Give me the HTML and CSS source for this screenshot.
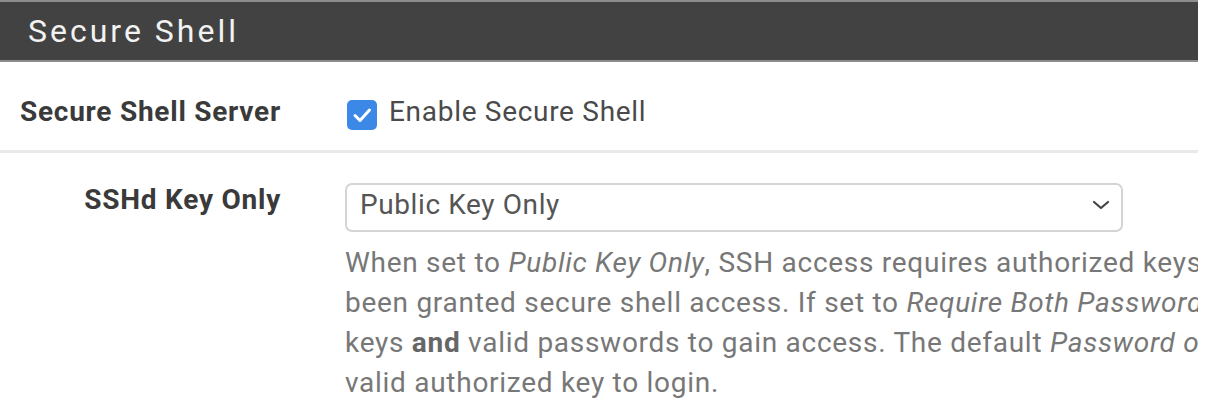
FILE: index.html
```html
<!DOCTYPE html>
<html>
<head>
<meta charset="utf-8">
<link rel="stylesheet" href="styles.css">
</head>
<body>
<div class="panel">
  <div class="panel-heading"><h2 class="panel-title">Secure Shell</h2></div>
  <div class="panel-body">
    <div class="form-group first">
      <div class="label">Secure Shell Server</div>
      <div class="field">
        <label class="check">
          <span class="box"><svg viewBox="0 0 30 30" width="30" height="30"><path d="M8 15.5 L13 20.5 L22.5 10" fill="none" stroke="#fff" stroke-width="3" stroke-linecap="round" stroke-linejoin="round"/></svg></span>
          <span class="check-text">Enable Secure Shell</span>
        </label>
      </div>
    </div>
    <div class="form-group second">
      <div class="label">SSHd Key Only</div>
      <div class="field">
        <div class="select">
          <span class="select-text">Public Key Only</span>
          <svg class="chev" viewBox="0 0 18 10" width="18" height="10"><path d="M2 2 L9 8 L16 2" fill="none" stroke="#444" stroke-width="2.2" stroke-linecap="round" stroke-linejoin="round"/></svg>
        </div>
        <div class="help">
          <div>When set to <em>Public Key Only</em>, SSH access requires authorized keys and these keys must be configured for users that have</div>
          <div>been granted secure shell access. If set to <em>Require Both Password and Public Key</em>, the SSH daemon requires both authorized</div>
          <div>keys <strong>and</strong> valid passwords to gain access. The default <em>Password or Public Key</em> setting allows either a valid password or a</div>
          <div>valid authorized key to login.</div>
        </div>
      </div>
    </div>
  </div>
</div>
</body>
</html>
```
FILE: styles.css
```css
html, body {
  margin: 0;
  padding: 0;
  background: #fff;
}
body {
  font-family: Roboto, "Liberation Sans", sans-serif;
  font-size: 28px;
  line-height: 40px;
  color: #333;
  letter-spacing: 0.6px;
}
.panel {
  width: 1198px;
  overflow: hidden;
}
.panel-heading {
  height: 58px;
  background: #424242;
  border-top: 2px solid #8c8c8c;
  border-bottom: 2px solid #8c8c8c;
  display: flex;
  align-items: center;
  padding-left: 28px;
}
.panel-title {
  margin: 0;
  font-size: 32px;
  font-weight: 400;
  letter-spacing: 3px;
  color: #f2f2f2;
  line-height: 40px;
}
.form-group {
  display: grid;
  grid-template-columns: 280px 1fr;
  column-gap: 65px;
}
.form-group.first {
  padding-top: 30px;
  padding-bottom: 18px;
  border-bottom: 3px solid #e9e9e9;
}
.form-group.second {
  padding-top: 27px;
}
.label {
  text-align: right;
  font-weight: 700;
  color: #3a3a3a;
  white-space: nowrap;
  letter-spacing: 0.75px;
  margin-right: -1px;
}
.field {
  min-width: 0;
}
.check {
  display: flex;
  align-items: center;
  gap: 12px;
  padding-left: 2px;
}
.box {
  width: 30px;
  height: 30px;
  border-radius: 5px;
  background: #3b88e6;
  display: flex;
  margin-top: 6px;
}
.check-text {
  color: #4a4a4a;
  letter-spacing: 0.7px;
}
.select {
  width: 778px;
  height: 49px;
  box-sizing: border-box;
  border: 2px solid #d4d4d4;
  border-radius: 7px;
  display: flex;
  align-items: center;
  justify-content: space-between;
  padding: 0 11px 0 13px;
  margin-top: 3px;
}
.select-text {
  font-size: 28px;
  color: #555;
  line-height: 40px;
  padding-bottom: 6px;
  letter-spacing: 0.6px;
}
.chev {
  display: block;
  margin-bottom: 5px;
}
.help {
  margin-top: 11px;
  color: #777;
  white-space: nowrap;
  letter-spacing: 0.72px;
}
.help em {
  font-style: italic;
}
.help strong {
  font-weight: 700;
  color: #666;
}
```
